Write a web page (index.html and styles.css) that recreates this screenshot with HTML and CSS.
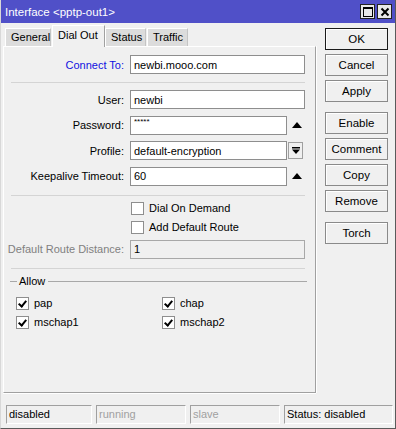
FILE: index.html
```html
<!DOCTYPE html>
<html lang="en">
<head>
  <meta charset="UTF-8" />
  <title>Interface &lt;pptp-out1&gt;</title>
  <link rel="stylesheet" href="styles.css">
</head>
<body>
  <div class="window">
    <div class="titlebar">
      <span class="title">Interface &lt;pptp-out1&gt;</span>
      <div class="title-btns">
        <span class="tbtn">
          <svg width="10" height="10" viewBox="0 0 10 10"><rect x="0.5" y="0.5" width="9" height="9" fill="none" stroke="#000"/><rect x="0" y="0" width="10" height="2" fill="#000"/></svg>
        </span>
        <span class="tbtn">
          <svg width="10" height="10" viewBox="0 0 10 10"><path d="M1.5 1.5 L8.5 8.5 M8.5 1.5 L1.5 8.5" stroke="#000" stroke-width="2"/></svg>
        </span>
      </div>
    </div>

    <div class="main">
      <div class="left">
        <div class="tabs">
          <div class="tab">General</div>
          <div class="tab active">Dial Out</div>
          <div class="tab">Status</div>
          <div class="tab">Traffic</div>
        </div>

        <div class="panel">
          <div class="row">
            <label class="lbl link">Connect To:</label>
            <input class="field" type="text" value="newbi.mooo.com" readonly>
          </div>
          <div class="sep first"></div>
          <div class="rows">
            <div class="row">
              <label class="lbl">User:</label>
              <input class="field" type="text" value="newbi" readonly>
            </div>
            <div class="row">
              <label class="lbl">Password:</label>
              <input class="field short mask" type="text" value="*****" readonly>
              <span class="side"><span class="tri"></span></span>
            </div>
            <div class="row">
              <label class="lbl">Profile:</label>
              <input class="field short" type="text" value="default-encryption" readonly>
              <span class="side">
                <span class="drop">
                  <svg width="8" height="7" viewBox="0 0 8 7"><rect x="0" y="0" width="8" height="1.5" fill="#000"/><polygon points="0,2.5 8,2.5 4,7" fill="#000"/></svg>
                </span>
              </span>
            </div>
            <div class="row">
              <label class="lbl">Keepalive Timeout:</label>
              <input class="field short" type="text" value="60" readonly>
              <span class="side"><span class="tri"></span></span>
            </div>
          </div>
          <div class="sep second"></div>
          <div class="checks">
            <div class="check"><span class="box"></span>Dial On Demand</div>
            <div class="check"><span class="box"></span>Add Default Route</div>
          </div>
          <div class="row dist">
            <label class="lbl disabled">Default Route Distance:</label>
            <input class="field off" type="text" value="1" readonly>
          </div>
          <div class="sep third"></div>

          <div class="group">
            <div class="group-head"><span class="dash"></span><span class="legend">Allow</span><span class="line"></span></div>
            <div class="allow">
              <div class="check"><span class="box on"></span>pap</div>
              <div class="check"><span class="box on"></span>chap</div>
              <div class="check"><span class="box on"></span>mschap1</div>
              <div class="check"><span class="box on"></span>mschap2</div>
            </div>
          </div>
        </div>
      </div>

      <div class="actions">
        <button class="btn default">OK</button>
        <button class="btn">Cancel</button>
        <button class="btn">Apply</button>
        <button class="btn gap">Enable</button>
        <button class="btn">Comment</button>
        <button class="btn">Copy</button>
        <button class="btn">Remove</button>
        <button class="btn gap">Torch</button>
      </div>
    </div>

    <div class="statusbar">
      <div class="cell s1">disabled</div>
      <div class="cell s2 dim">running</div>
      <div class="cell s3 dim">slave</div>
      <div class="cell s4">Status: disabled</div>
    </div>
  </div>
</body>
</html>
```

FILE: styles.css
```css
* { margin: 0; padding: 0; box-sizing: border-box; }
body {
  font-family: "Liberation Sans", Arial, sans-serif;
  font-size: 11px;
  color: #000;
  background: #f0f0f0;
}
.window {
  width: 396px;
  height: 429px;
  display: flex;
  flex-direction: column;
  background: #f0f0f0;
  border-right: 1px solid #5a5a5a;
  border-bottom: 1px solid #5a5a5a;
  border-left: 1px solid #d8d8d8;
}

/* title bar */
.titlebar {
  height: 23px;
  background: #5050c8;
  color: #fff;
  display: flex;
  align-items: center;
  padding-left: 4px;
}
.title { font-size: 11.5px; }
.title-btns {
  margin-left: auto;
  margin-right: 3px;
  display: flex;
  gap: 2px;
}
.tbtn {
  width: 15px;
  height: 15px;
  background: #e8e8e8;
  border: 1px solid #222;
  display: flex;
  align-items: center;
  justify-content: center;
}

/* main area */
.main {
  display: flex;
  padding-left: 2px;
}
.left { width: 313px; }
.tabs {
  height: 23px;
  display: flex;
  align-items: flex-start;
  padding-left: 2px;
}
.tab {
  margin-top: 5px;
  height: 18px;
  padding: 0 5px;
  line-height: 17px;
  background: #dcdcdc;
  border: 1px solid #c4c4c4;
  border-bottom: none;
  border-top-color: #fff;
  border-left-color: #fff;
}
.tab:nth-child(1) { width: 46px; }
.tab:nth-child(3) { width: 41px; }
.tab:nth-child(4) { width: 41px; margin-left: 1px; }
.tab.active {
  position: relative;
  z-index: 1;
  width: 53px;
  margin-top: 2px;
  height: 22px;
  margin-left: 1px;
  line-height: 19px;
  padding-top: 0;
  background: #f0f0f0;
  border-color: #fff #a0a0a0 transparent #fff;
}

.panel {
  height: 347px;
  border: 1px solid #a0a0a0;
  border-top-color: #fff;
  border-left-color: #fff;
  box-shadow: 1px 0 0 #fff, 0 1px 0 #fff;
  padding-top: 8px;
}
.row {
  display: flex;
  align-items: center;
  height: 19px;
}
.lbl {
  width: 120px;
  text-align: right;
  margin-right: 6px;
}
.lbl.link { color: #1010e0; }
.lbl.disabled { color: #808080; }
.field {
  width: 175px;
  height: 19px;
  border: 1px solid #8e8e8e;
  background: #fff;
  font: inherit;
  padding: 0 3px;
  outline: none;
}
.field.short { width: 157px; }
.field.mask {
  font-size: 8px;
  padding-bottom: 7px;
}
.field.off {
  background: #f0f0f0;
  border-color: #a8a8a8;
}
.side {
  width: 18px;
  display: flex;
  justify-content: center;
  padding-left: 2px;
}
.tri {
  width: 0;
  height: 0;
  border-left: 5px solid transparent;
  border-right: 5px solid transparent;
  border-bottom: 6px solid #000;
}
.drop {
  width: 15px;
  height: 17px;
  border: 1px solid #a0a0a0;
  background: #f0f0f0;
  display: flex;
  align-items: center;
  justify-content: center;
  margin-left: -3px;
}

.sep {
  height: 1px;
  background: #d4d4d4;
  margin-left: 7px;
  width: 294px;
}
.sep.first { margin-top: 8px; }
.sep.second { margin-top: 9px; }
.sep.third { margin-top: 9px; }
.rows {
  margin-top: 7px;
  display: flex;
  flex-direction: column;
  gap: 6.5px;
}

.checks {
  margin-top: 6px;
  display: flex;
  flex-direction: column;
  gap: 6px;
  padding-left: 127px;
}
.check {
  display: flex;
  align-items: center;
  height: 13px;
}
.box {
  width: 13px;
  height: 13px;
  border: 1px solid #8e8e8e;
  background: #fff;
  margin-right: 5px;
  position: relative;
}
.box.on::after {
  content: "";
  position: absolute;
  left: 3px;
  top: 1px;
  width: 3px;
  height: 6px;
  border: solid #000;
  border-width: 0 2px 2px 0;
  transform: rotate(40deg);
}
.dist { margin-top: 6px; }

.group { margin-top: 6px; }
.group-head {
  display: flex;
  align-items: center;
  height: 13px;
  padding-left: 6px;
  width: 303px;
}
.dash, .line {
  height: 1px;
  background: #a8a8a8;
}
.dash { width: 7px; }
.line { flex: 1; }
.legend { padding: 0 3px 0 2px; }
.allow {
  margin-top: 9px;
  display: grid;
  grid-template-columns: 146px 1fr;
  row-gap: 6px;
  padding-left: 12px;
}

/* buttons on the right */
.actions {
  margin-left: 9px;
  width: 63px;
  padding-top: 5px;
  display: flex;
  flex-direction: column;
  gap: 4px;
}
.btn {
  height: 22px;
  font: inherit;
  font-size: 11.5px;
  background: #f0f0f0;
  border: 1px solid #8a8a8a;
  box-shadow: inset 1px 1px 0 #fff;
  color: #000;
}
.btn.default { border-color: #1a1a1a; }
.btn.gap { margin-top: 6px; }

/* status bar */
.statusbar {
  margin-top: auto;
  margin-bottom: 4px;
  display: flex;
  gap: 4px;
  padding-left: 5px;
}
.cell {
  height: 19px;
  line-height: 17px;
  padding-left: 2px;
  border: 1px solid #fff;
  border-top-color: #a0a0a0;
  border-left-color: #a0a0a0;
}
.s1 { width: 86px; }
.s2, .s3 { width: 90px; }
.s4 { width: 109px; }
.dim { color: #a0a0a0; }
```
